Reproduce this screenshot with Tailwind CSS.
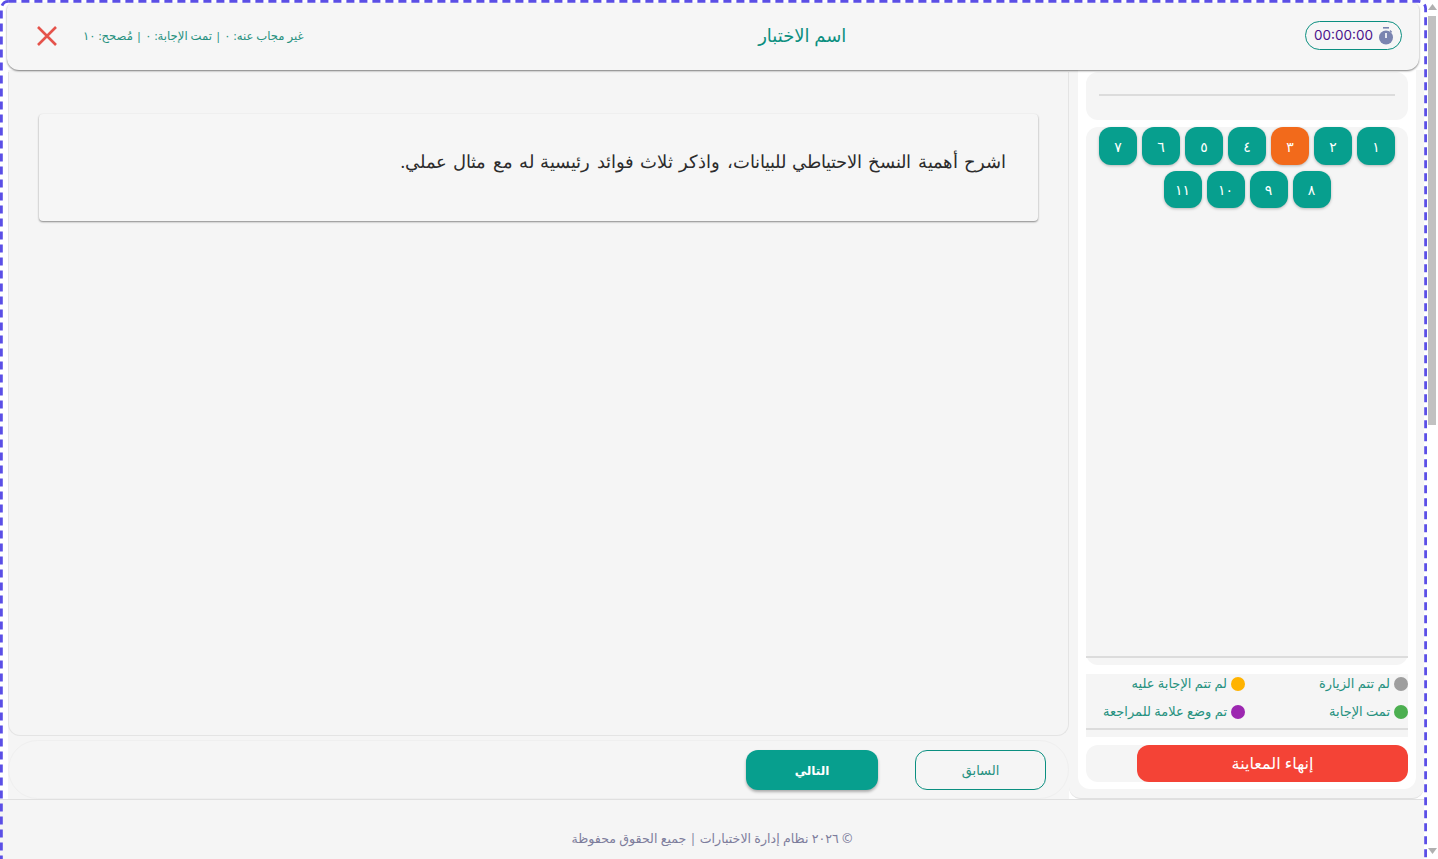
<!DOCTYPE html>
<html lang="ar" dir="rtl">
<head>
    <meta charset="UTF-8">
    <title>اسم الاختبار</title>
    <script src="https://cdn.jsdelivr.net/npm/@tailwindcss/browser@4"></script>
</head>
<body class="bg-white h-[859px] overflow-hidden relative font-['Noto_Sans','DejaVu_Sans',sans-serif]">
    <div class="w-[1424px] h-[859px] mr-auto flex flex-col">
        <!-- Header -->
        <header class="h-[67px] shrink-0 mt-[3px] mr-[5px] ml-[7px] pr-[17px] pl-[29px] pb-[2px] bg-[#f6f6f6] rounded-b-xl rounded-t-md shadow-[0_1px_2px_rgba(0,0,0,0.5)] flex items-center justify-between relative z-10">
            <div class="w-[97px] h-[29px] rounded-full border border-[#0b8f80] flex items-center justify-center gap-[6px] text-[13.5px] text-[#4a148c]" dir="ltr">
                <span class="font-['Inter']">00:00:00</span>
                <svg class="w-[14px] h-[18px]" viewBox="0 0 14 18"><rect x="4" y="0" width="6" height="1.6" fill="#7a84b0"/><path d="M11 3.6 L12.6 5.2" stroke="#7a84b0" stroke-width="1.4"/><circle cx="7" cy="10.5" r="7" fill="#7a84b0"/><rect x="6.2" y="6" width="1.6" height="5" fill="#fff"/></svg>
            </div>
            <h1 class="text-[18px] text-[#0b8f80] mr-[4px]">اسم الاختبار</h1>
            <div class="flex items-center gap-[25px]">
                <span class="text-[11.6px] text-[#26917f]">غير مجاب عنه: ٠ | تمت الإجابة: ٠ | مُصحح: ١٠</span>
                <svg class="w-[22px] h-[22px]" viewBox="0 0 22 22"><path d="M2 2 L20 20 M20 2 L2 20" stroke="#e5534b" stroke-width="2.6" fill="none"/></svg>
            </div>
        </header>

        <div class="h-[729px] shrink-0 flex">
            <!-- Sidebar -->
            <aside class="w-[355px] shrink-0 bg-[#f5f5f5] pl-[9px] pr-[8px] pb-[9px] border-b border-[#e0e0e0] rounded-b-xl">
                <div class="h-full bg-white rounded-b-xl px-[8px] pt-[2px] pb-[7px] flex flex-col">
                    <div class="h-[48px] shrink-0 bg-[#f5f5f5] rounded-xl px-[13px] pt-[22px]">
                        <div class="h-[2px] bg-[#dcdcdc]"></div>
                    </div>
                    <div class="h-[538px] shrink-0 mt-[7px] bg-[#f5f5f5] rounded-xl flex flex-col">
                        <div class="flex-1 flex flex-wrap content-start justify-center gap-x-[5px] gap-y-[6px] px-[13px]">
                            <button class="w-[38px] h-[38px] rounded-xl bg-[#079f8e] text-white text-[14px] shadow-[0_1px_3px_rgba(0,0,0,0.25)]">١</button>
                            <button class="w-[38px] h-[38px] rounded-xl bg-[#079f8e] text-white text-[14px] shadow-[0_1px_3px_rgba(0,0,0,0.25)]">٢</button>
                            <button class="w-[38px] h-[38px] rounded-xl bg-[#f26a1b] text-white text-[14px] shadow-[0_1px_3px_rgba(0,0,0,0.25)]">٣</button>
                            <button class="w-[38px] h-[38px] rounded-xl bg-[#079f8e] text-white text-[14px] shadow-[0_1px_3px_rgba(0,0,0,0.25)]">٤</button>
                            <button class="w-[38px] h-[38px] rounded-xl bg-[#079f8e] text-white text-[14px] shadow-[0_1px_3px_rgba(0,0,0,0.25)]">٥</button>
                            <button class="w-[38px] h-[38px] rounded-xl bg-[#079f8e] text-white text-[14px] shadow-[0_1px_3px_rgba(0,0,0,0.25)]">٦</button>
                            <button class="w-[38px] h-[38px] rounded-xl bg-[#079f8e] text-white text-[14px] shadow-[0_1px_3px_rgba(0,0,0,0.25)]">٧</button>
                            <button class="w-[38px] h-[37px] rounded-xl bg-[#079f8e] text-white text-[14px] shadow-[0_1px_3px_rgba(0,0,0,0.25)]">٨</button>
                            <button class="w-[38px] h-[37px] rounded-xl bg-[#079f8e] text-white text-[14px] shadow-[0_1px_3px_rgba(0,0,0,0.25)]">٩</button>
                            <button class="w-[38px] h-[37px] rounded-xl bg-[#079f8e] text-white text-[14px] shadow-[0_1px_3px_rgba(0,0,0,0.25)]">١٠</button>
                            <button class="w-[38px] h-[37px] rounded-xl bg-[#079f8e] text-white text-[14px] shadow-[0_1px_3px_rgba(0,0,0,0.25)]">١١</button>
                        </div>
                        <div class="h-[2px] bg-[#dcdcdc] mb-[7px]"></div>
                    </div>
                    <!-- Legend -->
                    <div class="h-[63px] shrink-0 mt-[9px] bg-[#f5f5f5] flex flex-col">
                        <div class="flex-1 grid grid-cols-[163px_1fr] grid-rows-[20px_20px] gap-y-[8px] text-[13px] text-[#26917f]">
                            <div class="flex items-center gap-[4px]"><span class="w-[14px] h-[14px] rounded-full bg-[#9e9e9e]"></span>لم تتم الزيارة</div>
                            <div class="flex items-center gap-[4px]"><span class="w-[14px] h-[14px] rounded-full bg-[#ffb300]"></span>لم تتم الإجابة عليه</div>
                            <div class="flex items-center gap-[4px]"><span class="w-[14px] h-[14px] rounded-full bg-[#4caf50]"></span>تمت الإجابة</div>
                            <div class="flex items-center gap-[4px]"><span class="w-[14px] h-[14px] rounded-full bg-[#9c27b0]"></span>تم وضع علامة للمراجعة</div>
                        </div>
                        <div class="h-[2px] bg-[#dcdcdc] mb-[7px]"></div>
                    </div>
                    <div class="h-[37px] shrink-0 mt-[8px] bg-[#f5f5f5] rounded-xl">
                        <button class="w-[271px] h-full rounded-xl bg-[#f44336] text-white text-[16px] pb-[2px]">إنهاء المعاينة</button>
                    </div>
                </div>
            </aside>

            <!-- Main -->
            <main class="flex-1 ml-[8px] bg-[#f5f5f5] flex flex-col">
                <div class="h-[664px] shrink-0 mt-[2px] border border-t-0 border-[#e4e4e4] rounded-b-xl pt-[42px] px-[30px]">
                    <div class="h-[107px] bg-[#f6f6f6] rounded shadow-[0_1px_2px_rgba(0,0,0,0.45)] pr-[32px] pt-[33px]">
                        <p class="text-[18.3px] leading-[30px] [word-spacing:1.75px] text-[#2c2c2c] font-['Liberation_Serif',serif]">اشرح أهمية النسخ الاحتياطي للبيانات، واذكر ثلاث فوائد رئيسية له مع مثال عملي.</p>
                    </div>
                </div>
                <div class="h-[59px] shrink-0 mt-[4px] rounded-[30px] border border-[#efefef] pr-[22px] flex gap-[37px] items-start pt-[9px]">
                    <button class="w-[131px] h-[40px] rounded-xl border border-[#0b8f80] text-[13px] text-[#26917f] pt-[2px]">السابق</button>
                    <button class="w-[132px] h-[40px] rounded-xl bg-[#079f8e] text-white text-[12px] font-semibold pt-[2px] shadow-[0_2px_3px_rgba(0,0,0,0.3)]">التالي</button>
                </div>
            </main>
        </div>

        <!-- Footer -->
        <footer class="flex-1 bg-[#f5f5f5] border-t border-[#e0e0e0] flex items-end justify-center pb-[10px]">
            <span class="text-[12.6px] text-[#7d7d9c]">© ٢٠٢٦ نظام إدارة الاختبارات | جميع الحقوق محفوظة</span>
        </footer>
    </div>

    <!-- Dashed focus outline over the page -->
    <svg class="absolute top-0 left-0 w-[1427px] h-[859px] pointer-events-none z-20" viewBox="0 0 1427 859"><rect x="1.4" y="1.4" width="1424.2" height="900" rx="7" fill="none" stroke="#5b4fe6" stroke-width="2.8" stroke-dasharray="8 5"/></svg>

    <!-- Scrollbar -->
    <div class="absolute top-0 left-[1427px] w-[11px] h-[859px] bg-white z-10" dir="ltr">
        <div class="absolute top-[16px] left-[1px] w-[8px] h-[409px] bg-[#c1c1c1]"></div>
        <svg class="absolute top-[4px] left-0 w-[11px] h-[7px]" viewBox="0 0 11 7"><path d="M5.5 0 L10 6 L1 6 Z" fill="#b0b0b0"/></svg>
        <svg class="absolute top-[848px] left-0 w-[11px] h-[7px]" viewBox="0 0 11 7"><path d="M1 0 L10 0 L5.5 6 Z" fill="#b0b0b0"/></svg>
    </div>
</body>
</html>
